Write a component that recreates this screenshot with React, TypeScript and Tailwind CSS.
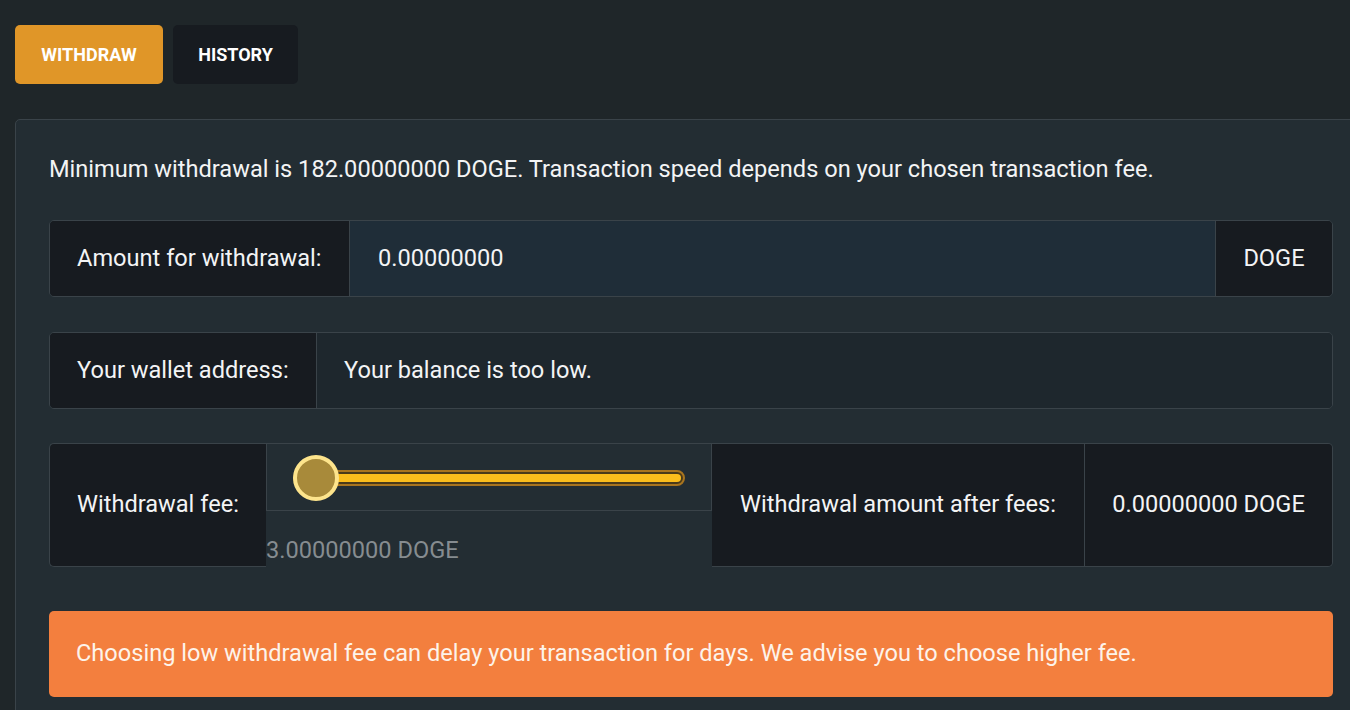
import React from 'react';

function Slider() {
  return (
    <div className="relative h-[66px] w-full">
      <div className="absolute left-[26px] right-[26px] top-[26px] h-[16px] rounded-full border-2 border-[#a8741f] bg-[#4a3a1a] p-[2px]">
        <div className="h-full w-full rounded-full bg-[#fbbd1c]"></div>
      </div>
      <div className="absolute left-[26px] top-[11px] h-[46px] w-[46px] rounded-full border-[4px] border-[#fde48c] bg-[#a88a3a]"></div>
    </div>
  );
}

export default function App() {
  return (
    <div
      className="min-h-[710px] w-[1350px] overflow-hidden bg-[#1f2629] text-[#f3f4f5]"
      style={{ fontFamily: 'Roboto, "Noto Sans", sans-serif' }}
    >
      {/* Tabs */}
      <div className="flex gap-[10px] pl-[15px] pt-[25px]">
        <button className="h-[59px] w-[148px] rounded-[5px] bg-[#e09628] text-[18px] font-bold text-white">
          WITHDRAW
        </button>
        <button className="h-[59px] w-[125px] rounded-[5px] bg-[#171b20] text-[18px] font-bold text-white">
          HISTORY
        </button>
      </div>

      {/* Panel */}
      <div className="ml-[15px] mt-[35px] w-[1360px] rounded-tl-[5px] border border-[#3a4349] bg-[#232d33] pb-[20px] pl-[33px] pr-[41px] pt-[33px] text-[23.6px]">
        <p className="leading-[32px]">
          Minimum withdrawal is 182.00000000 DOGE. Transaction speed depends on your chosen transaction fee.
        </p>

        {/* Amount row */}
        <div className="mt-[35px] flex h-[77px] overflow-hidden rounded-[5px] border border-[#3a4349]">
          <div className="flex w-[299px] items-center bg-[#171b20] pl-[27px]">Amount for withdrawal:</div>
          <div className="flex flex-1 items-center border-l border-[#3a4349] bg-[#1f2d38] pl-[28px]">0.00000000</div>
          <div className="flex w-[117px] items-center justify-center border-l border-[#3a4349] bg-[#171b20]">DOGE</div>
        </div>

        {/* Wallet row */}
        <div className="mt-[35px] flex h-[77px] overflow-hidden rounded-[5px] border border-[#3a4349]">
          <div className="flex w-[266px] items-center bg-[#171b20] pl-[27px]">Your wallet address:</div>
          <div className="flex flex-1 items-center border-l border-[#3a4349] bg-[#1e272d] pl-[27px]">
            Your balance is too low.
          </div>
        </div>

        {/* Fee row */}
        <div className="mt-[34px] flex h-[124px]">
          <div className="flex w-[217px] items-center rounded-l-[5px] border border-r-0 border-[#3a4349] bg-[#171b20] pl-[27px]">
            Withdrawal fee:
          </div>
          <div className="flex w-[446px] flex-col">
            <div className="border border-[#3a4349]">
              <Slider />
            </div>
            <div className="mt-[25px] leading-[28px] text-[#868c90]">3.00000000 DOGE</div>
          </div>
          <div className="flex flex-1 overflow-hidden rounded-r-[5px] border border-l-0 border-[#3a4349]">
            <div className="flex w-[372px] items-center justify-center bg-[#171b20]">Withdrawal amount after fees:</div>
            <div className="flex flex-1 items-center justify-center border-l border-[#3a4349] bg-[#171b20]">
              0.00000000 DOGE
            </div>
          </div>
        </div>

        {/* Warning */}
        <div className="mt-[44px] flex h-[86px] items-center rounded-[5px] bg-[#f37f3e] pl-[27px] text-[#fdf3ea]">
          Choosing low withdrawal fee can delay your transaction for days. We advise you to choose higher fee.
        </div>
      </div>
    </div>
  );
}
